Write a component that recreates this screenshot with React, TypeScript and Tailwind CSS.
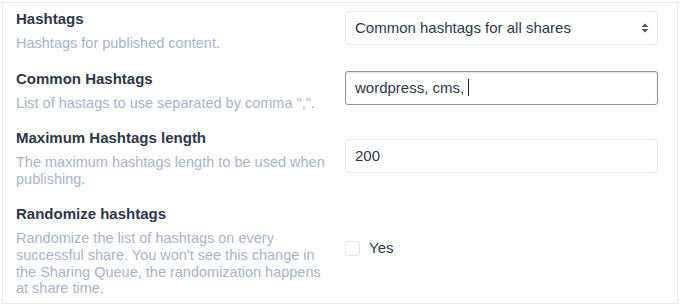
import React from 'react';

const font = { fontFamily: '"Liberation Sans", Arial, sans-serif' };

interface RowProps {
  label: string;
  description: string;
  children: React.ReactNode;
}

const Row: React.FC<RowProps> = ({ label, description, children }) => (
  <>
    <div>
      <div className="text-[15px] font-bold leading-[20px] text-[#2d3748]">{label}</div>
      <div className="mt-[6px] text-[14.5px] leading-[16.6px] text-[#a9b4c6]">{description}</div>
    </div>
    <div className="flex items-center pb-[4px]">{children}</div>
  </>
);

const App: React.FC = () => {
  return (
    <div className="w-[680px] h-[306px] bg-white p-[2px]" style={font}>
      <div className="h-[302px] border border-[#e6e8ec] pl-[13px] pr-[19px] pt-[6px]">
        <div className="grid grid-cols-[314px_313px] gap-x-[15px] gap-y-[17px] items-center">
          <Row label="Hashtags" description="Hashtags for published content.">
            <div className="relative w-full h-[34px] flex items-center rounded-[4px] border border-[#e2e8f0] bg-white pl-[9px] text-[15px] text-[#2d3748]">
              Common hashtags for all shares
              <svg className="absolute right-[7px] top-1/2 -translate-y-1/2" width="10" height="12" viewBox="0 0 10 12">
                <path d="M5 1.5 L8.5 5 L1.5 5 Z" fill="#4a5568" />
                <path d="M5 10.5 L8.5 7 L1.5 7 Z" fill="#4a5568" />
              </svg>
            </div>
          </Row>
          <Row label="Common Hashtags" description={'List of hastags to use separated by comma ",".'}>
            <div className="w-full h-[34px] flex items-center rounded-[3px] border border-[#8f949c] bg-white pl-[9px] text-[15px] text-[#2d3748] shadow-[inset_0_1px_2px_rgba(0,0,0,0.12)]">
              wordpress, cms,&nbsp;
              <span className="inline-block w-[1px] h-[17px] bg-[#1a202c]" />
            </div>
          </Row>
          <Row
            label="Maximum Hashtags length"
            description="The maximum hashtags length to be used when publishing."
          >
            <div className="w-full h-[34px] flex items-center rounded-[4px] border border-[#e2e8f0] bg-white pl-[9px] text-[15px] text-[#2d3748]">
              200
            </div>
          </Row>
          <Row
            label="Randomize hashtags"
            description="Randomize the list of hashtags on every successful share. You won't see this change in the Sharing Queue, the randomization happens at share time."
          >
            <label className="flex items-center gap-[9px] text-[15px] text-[#2d3748]">
              <span className="inline-block w-[15px] h-[15px] rounded-[3px] border border-[#e2e8f0] bg-white" />
              Yes
            </label>
          </Row>
        </div>
      </div>
    </div>
  );
};

export default App;
